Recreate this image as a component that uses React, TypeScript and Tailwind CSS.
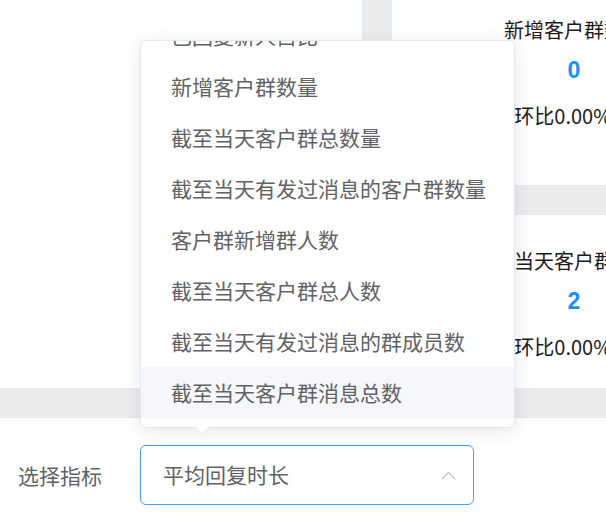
import React from "react";

const items = [
  "已回复新人占比",
  "新增客户群数量",
  "截至当天客户群总数量",
  "截至当天有发过消息的客户群数量",
  "客户群新增群人数",
  "截至当天客户群总人数",
  "截至当天有发过消息的群成员数",
  "截至当天客户群消息总数",
];

function StatCard({ title, value, className }: { title: string; value: string; className: string }) {
  return (
    <div className={"bg-white flex flex-col items-center " + className}>
      <div className="text-[20px] leading-[28px] text-[#1a1a1a] whitespace-nowrap">{title}</div>
      <div className="mt-[12px] text-[23px] leading-[28px] font-bold text-[#1890ff] font-['Liberation_Sans',sans-serif]">
        {value}
      </div>
      <div className="mt-[18px] pr-[22px] text-[20px] leading-[28px] text-[#1a1a1a] whitespace-nowrap">环比0.00%</div>
    </div>
  );
}

export default function App() {
  return (
    <div
      className="relative w-[606px] h-[526px] overflow-hidden bg-white"
      style={{ fontFamily: "'Noto Sans CJK SC', 'Noto Sans', sans-serif" }}
    >
      {/* top stats area */}
      <div className="flex h-[388px] bg-[#ebeced] w-[756px]">
        <div className="w-[362px] shrink-0 bg-white" />
        <div className="w-[30px] shrink-0" />
        <div className="w-[364px] shrink-0 flex flex-col gap-[30px]">
          <StatCard title="新增客户群数量" value="0" className="h-[185px] pt-[16px]" />
          <StatCard title="截至当天客户群总数量" value="2" className="h-[173px] pt-[32px]" />
        </div>
      </div>
      <div className="h-[30px] bg-[#ebeced] border-b border-[#e6e9f0]" />

      {/* bottom selector */}
      <div className="flex items-center pt-[27px] pl-[18px]">
        <div className="w-[122px] text-[21px] leading-[30px] text-[#606266]">选择指标</div>
        <div className="w-[334px] h-[60px] rounded-[6px] border border-[#409eff] flex items-center justify-between pl-[22px] pr-[17px]">
          <span className="text-[21px] text-[#606266]">平均回复时长</span>
          <svg width="15" height="9" viewBox="0 0 15 9" fill="none">
            <polyline points="1,8 7.5,1.5 14,8" stroke="#c0c4cc" strokeWidth="1.4" />
          </svg>
        </div>
      </div>

      {/* dropdown popper */}
      <div className="absolute left-[140px] top-[40px] w-[375px] h-[388px] bg-white border border-[#e4e7ed] rounded-[6px] shadow-[0_3px_18px_rgba(0,0,0,0.1)]">
        <div className="h-[377px] overflow-hidden rounded-t-[6px]">
          <div className="mt-[-31px]">
            {items.map((t, i) => (
              <div
                key={t}
                className={
                  "h-[51px] leading-[51px] px-[30px] text-[21px] text-[#606266] whitespace-nowrap " +
                  (i === items.length - 1 ? "bg-[#f5f7fa]" : "")
                }
              >
                {t}
              </div>
            ))}
          </div>
        </div>
        <div className="absolute left-[56px] bottom-[-6px] w-[10px] h-[10px] bg-white border-r border-b border-[#e4e7ed] rotate-45" />
      </div>
    </div>
  );
}
